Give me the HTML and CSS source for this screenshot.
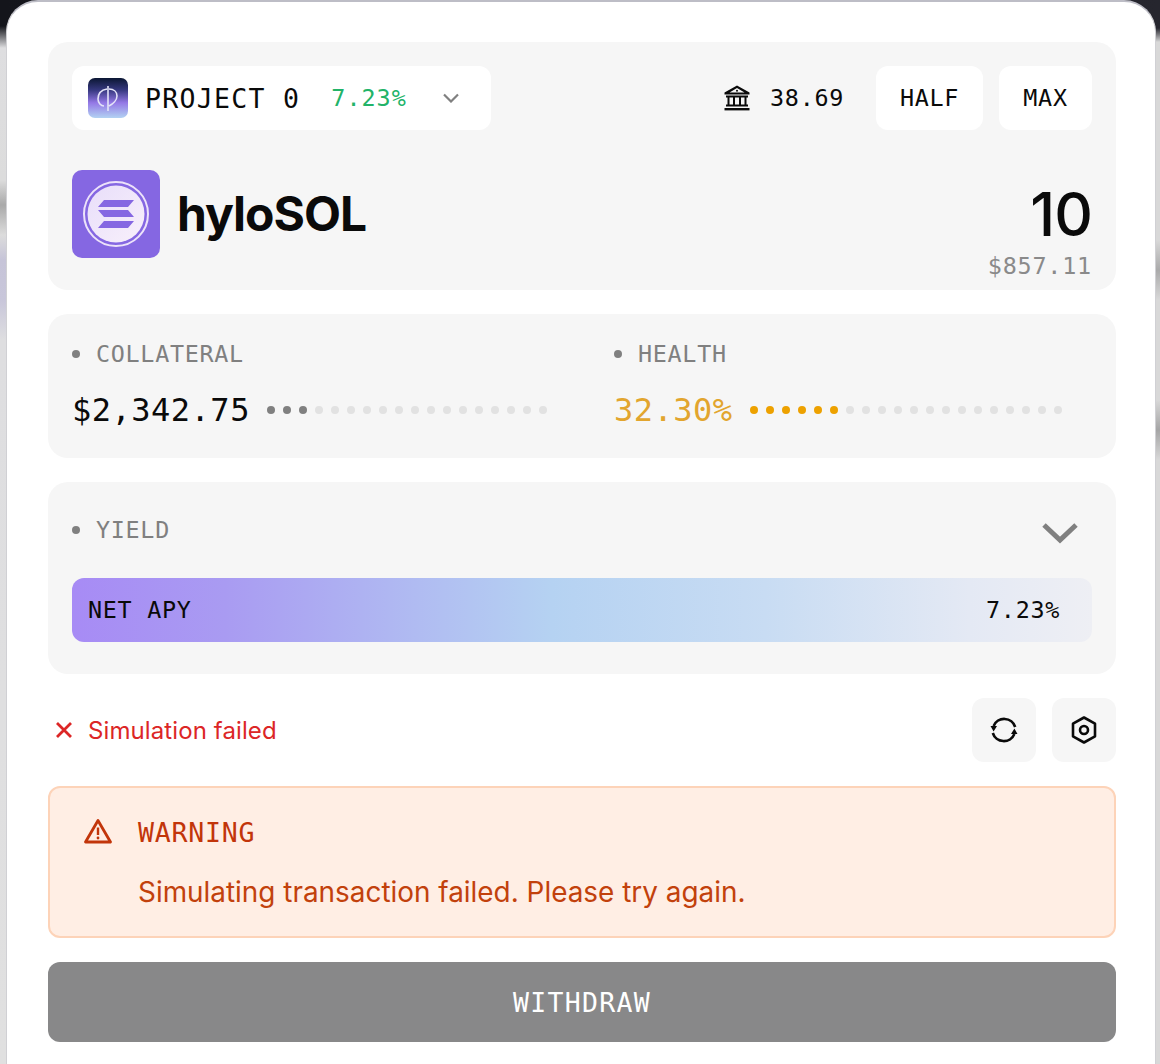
FILE: index.html
```html
<!DOCTYPE html>
<html lang="en">
<head>
  <meta charset="UTF-8">
  <title>Withdraw hyloSOL</title>
  <link rel="stylesheet" href="styles.css">
</head>
<body>
  <main class="sheet">
    <section class="panel amount-panel">
      <div class="top-row">
        <button class="project-select">
          <svg class="project-logo" viewBox="0 0 40 40">
            <defs>
              <linearGradient id="projectBg" x1="0" y1="0" x2="0" y2="1">
                <stop offset="0" stop-color="#0b1733"/>
                <stop offset="0.3" stop-color="#36387f"/>
                <stop offset="0.62" stop-color="#9478e6"/>
                <stop offset="1" stop-color="#b2d2f2"/>
              </linearGradient>
            </defs>
            <rect width="40" height="40" rx="7" fill="url(#projectBg)"/>
            <path d="M19 11 C13 12 10 16 10 21 C10 25 13 28 16 28 M21 11 C26 11 29 14 29 18 C29 22 25 26 21 28 M20 8 V33" fill="none" stroke="#e4e4f8" stroke-width="1.6"/>
          </svg>
          <span class="project-name">PROJECT 0</span>
          <span class="project-apy">7.23%</span>
          <svg class="select-chevron" viewBox="0 0 16 10">
            <path d="M1 1.5 L8 8.5 L15 1.5" fill="none" stroke="#808080" stroke-width="2.2"/>
          </svg>
        </button>
        <div class="balance">
          <svg class="bank-icon" viewBox="0 0 28 28">
            <path d="M14 1.5 L26.5 8.5 V10.5 H1.5 V8.5 Z M14 4 L6.5 8.5 H21.5 Z" fill="#0a0a0a" fill-rule="evenodd"/>
            <circle cx="14" cy="6.8" r="1" fill="#0a0a0a"/>
            <path d="M3 12.5 H25 M5.5 13 V21 M11 13 V21 M17 13 V21 M22.5 13 V21 M3 21.5 H25" fill="none" stroke="#0a0a0a" stroke-width="2"/>
            <rect x="1.5" y="24" width="25" height="2.4" fill="#0a0a0a"/>
          </svg>
          <span>38.69</span>
        </div>
        <button class="pill-btn half-btn">HALF</button>
        <button class="pill-btn max-btn">MAX</button>
      </div>
      <div class="token-row">
        <svg class="token-logo" viewBox="0 0 88 88">
          <defs>
            <linearGradient id="tokenFace" x1="0" y1="0" x2="1" y2="1">
              <stop offset="0" stop-color="#e8defa"/>
              <stop offset="1" stop-color="#f8f0fb"/>
            </linearGradient>
          </defs>
          <rect width="88" height="88" rx="10" fill="#8567e2"/>
          <circle cx="44" cy="44" r="32" fill="none" stroke="#ece2fa" stroke-width="2"/>
          <circle cx="44" cy="44" r="28.5" fill="url(#tokenFace)"/>
          <path d="M32 30 H62 L56 37 H26 Z M26 40 H56 L62 47 H32 Z M32 51 H62 L56 58 H26 Z" fill="#8567e2"/>
        </svg>
        <span class="token-name">hyloSOL</span>
        <div class="token-amount">
          <div class="amount-value">10</div>
          <div class="amount-usd">$857.11</div>
        </div>
      </div>
    </section>

    <section class="panel stats-panel">
      <div class="stat">
        <div class="stat-label">COLLATERAL</div>
        <div class="stat-row">
          <span class="stat-value">$2,342.75</span>
          <div class="dots">
            <i class="on"></i><i class="on"></i><i class="on"></i><i></i><i></i><i></i><i></i><i></i><i></i><i></i><i></i><i></i><i></i><i></i><i></i><i></i><i></i><i></i>
          </div>
        </div>
      </div>
      <div class="stat stat-health">
        <div class="stat-label">HEALTH</div>
        <div class="stat-row">
          <span class="stat-value">32.30%</span>
          <div class="dots">
            <i class="on"></i><i class="on"></i><i class="on"></i><i class="on"></i><i class="on"></i><i class="on"></i><i></i><i></i><i></i><i></i><i></i><i></i><i></i><i></i><i></i><i></i><i></i><i></i><i></i><i></i>
          </div>
        </div>
      </div>
    </section>

    <section class="panel yield-panel">
      <div class="yield-head">
        <div class="stat-label">YIELD</div>
        <svg class="yield-chevron" viewBox="0 0 36 22">
          <path d="M2 3 L18 18 L34 3" fill="none" stroke="#808080" stroke-width="5"/>
        </svg>
      </div>
      <div class="apy-bar">
        <span>NET APY</span>
        <span>7.23%</span>
      </div>
    </section>

    <div class="status-row">
      <svg class="fail-icon" viewBox="0 0 18 18">
        <path d="M2 2 L16 16 M16 2 L2 16" fill="none" stroke="#dc2626" stroke-width="2.8"/>
      </svg>
      <span class="fail-text">Simulation failed</span>
      <button class="icon-btn refresh-btn">
        <svg viewBox="0 0 28 28" width="28" height="28">
          <path d="M25.2 11 A11.5 11.5 0 0 0 3.6 10" fill="none" stroke="#0a0a0a" stroke-width="2.6"/>
          <path d="M2.8 17 A11.5 11.5 0 0 0 24.4 18" fill="none" stroke="#0a0a0a" stroke-width="2.6"/>
          <path d="M0.5 10 L7 10 L3.6 15.5 Z M27.5 18 L21 18 L24.4 12.5 Z" fill="#0a0a0a"/>
        </svg>
      </button>
      <button class="icon-btn settings-btn">
        <svg viewBox="0 0 28 28" width="28" height="28">
          <path d="M14 1.5 L25 7.7 V20.3 L14 26.5 L3 20.3 V7.7 Z" fill="none" stroke="#0a0a0a" stroke-width="2.6" stroke-linejoin="round"/>
          <circle cx="14" cy="14" r="4" fill="none" stroke="#0a0a0a" stroke-width="2.6"/>
        </svg>
      </button>
    </div>

    <section class="warning">
      <svg class="warning-icon" viewBox="0 0 28 26">
        <path d="M14 2.5 L26.5 24 H1.5 Z" fill="none" stroke="#c2350a" stroke-width="2.8" stroke-linejoin="round"/>
        <path d="M14 9.5 V17" stroke="#c2350a" stroke-width="2.4"/>
        <circle cx="14" cy="20" r="1.4" fill="#c2350a"/>
      </svg>
      <div class="warning-body">
        <div class="warning-title">WARNING</div>
        <p class="warning-text">Simulating transaction failed. Please try again.</p>
      </div>
    </section>

    <button class="withdraw-btn">WITHDRAW</button>
  </main>
</body>
</html>
```

FILE: styles.css
```css
* {
  box-sizing: border-box;
}

body {
  margin: 0;
  height: 1064px;
  overflow: hidden;
  padding: 0 4px 0 6px;
  background:
    linear-gradient(to bottom, #14151b 0, #14151b 26px, #dedee0 48px, #dcdcdc 180px, #a9a9a9 205px, #dcdcdc 235px, #c6c4d8 260px, #c8c6da 300px, #dedee0 340px, #e0e0e0 100%) left top / 8px 100% no-repeat,
    linear-gradient(to bottom, #26262e 0, #26262e 28px, #d8d8d8 42px, #d8d8d8 240px, #aaaaaa 270px, #d8d8d8 300px, #d8d8d8 400px, #a5a5a5 430px, #d8d8d8 460px, #d8d8d8 100%) right top / 5px 100% no-repeat,
    linear-gradient(to right, #14151b, #26262e) left top / 100% 34px no-repeat,
    #e0e0e0;
  font-family: "DejaVu Sans Mono", monospace;
  color: #0a0a0a;
}

button {
  font-family: inherit;
  border: none;
  cursor: pointer;
}

.sheet {
  height: 1100px;
  background: #fff;
  border-radius: 32px 32px 0 0;
  border: 1px solid #d0d0d4;
  border-top: 2px solid #bdbdc6;
  border-bottom: none;
  padding: 40px 39px 0 41px;
  display: flex;
  flex-direction: column;
}

.panel {
  background: #f6f6f6;
  border-radius: 20px;
  padding: 24px;
}

.amount-panel {
  height: 248px;
  flex: none;
}

.top-row {
  display: flex;
  align-items: center;
  height: 64px;
}

.project-select {
  width: 419px;
  height: 64px;
  background: #fff;
  border-radius: 12px;
  padding: 0 0 0 16px;
  display: flex;
  align-items: center;
  color: #0a0a0a;
}

.project-logo {
  width: 40px;
  height: 40px;
  flex: none;
}

.project-name {
  margin-left: 17px;
  font-size: 26.5px;
  letter-spacing: 1.3px;
}

.project-apy {
  margin-left: 31px;
  font-size: 23.4px;
  letter-spacing: 1px;
  color: #22b368;
}

.select-chevron {
  width: 16px;
  height: 10px;
  margin-left: 36px;
}

.balance {
  margin-left: auto;
  display: flex;
  align-items: center;
  gap: 19px;
  font-size: 23.4px;
  letter-spacing: 0.7px;
}

.bank-icon {
  width: 28px;
  height: 28px;
}

.pill-btn {
  height: 64px;
  background: #fff;
  border-radius: 12px;
  font-size: 23.4px;
  letter-spacing: 0.7px;
  color: #0a0a0a;
  padding: 0;
}

.half-btn {
  width: 107px;
  margin-left: 32px;
}

.max-btn {
  width: 93px;
  margin-left: 16px;
}

.token-row {
  display: flex;
  align-items: flex-start;
  margin-top: 40px;
}

.token-logo {
  width: 88px;
  height: 88px;
  flex: none;
}

.token-name {
  margin-left: 17px;
  font-family: "Inter", sans-serif;
  font-weight: 700;
  font-size: 48px;
  letter-spacing: -1px;
  line-height: 88px;
}

.token-amount {
  margin-left: auto;
  margin-top: 12px;
  text-align: right;
}

.amount-value {
  font-family: "Inter", sans-serif;
  font-weight: 500;
  font-size: 60px;
  line-height: 64px;
  letter-spacing: -1px;
}

.amount-usd {
  margin-top: 5px;
  font-size: 23.4px;
  letter-spacing: 0.8px;
  line-height: 30px;
  color: #8a8a8a;
}

.stats-panel {
  margin-top: 24px;
  height: 144px;
  flex: none;
  display: flex;
}

.stat {
  flex: none;
  width: 542px;
}

.stat-health {
  flex: 1;
  width: auto;
}

.stat-label {
  display: flex;
  align-items: center;
  font-size: 23.4px;
  letter-spacing: 0.7px;
  line-height: 32px;
  color: #808080;
}

.stat-label::before {
  content: "";
  width: 8px;
  height: 8px;
  border-radius: 50%;
  background: #808080;
  margin-right: 16px;
}

.stat-row {
  display: flex;
  align-items: center;
  margin-top: 20px;
}

.stat-value {
  font-size: 32px;
  letter-spacing: 0.5px;
  line-height: 40px;
}

.dots {
  display: flex;
  gap: 8px;
  margin-left: 17px;
}

.dots i {
  width: 8px;
  height: 8px;
  border-radius: 50%;
  background: #e2e2e2;
}

.dots i.on {
  background: #808080;
}

.stat-health .stat-value {
  color: #e2a52e;
}

.stat-health .dots i.on {
  background: #eda100;
}

.yield-panel {
  margin-top: 24px;
  height: 192px;
  flex: none;
}

.yield-head {
  display: flex;
  justify-content: space-between;
  align-items: center;
  height: 48px;
}

.yield-chevron {
  width: 36px;
  height: 22px;
  margin-right: 14px;
  margin-top: 6px;
}

.apy-bar {
  margin-top: 24px;
  height: 64px;
  border-radius: 12px;
  padding: 0 32px 0 16px;
  display: flex;
  justify-content: space-between;
  align-items: center;
  font-size: 23.4px;
  letter-spacing: 0.7px;
  background: linear-gradient(to right, #a78bf5 0, #a99bf2 15%, #b5d2f2 47%, #c8dcf3 68%, #e4e9f4 88%, #eeeff4 100%);
}

.status-row {
  margin-top: 24px;
  height: 64px;
  flex: none;
  display: flex;
  align-items: center;
}

.fail-icon {
  width: 18px;
  height: 18px;
  margin-left: 7px;
}

.fail-text {
  margin-left: 15px;
  font-family: "Inter", sans-serif;
  font-size: 24px;
  letter-spacing: 0.1px;
  color: #dc2626;
}

.icon-btn {
  width: 64px;
  height: 64px;
  background: #f6f6f6;
  border-radius: 12px;
  padding: 0;
  display: flex;
  align-items: center;
  justify-content: center;
}

.refresh-btn {
  margin-left: auto;
}

.settings-btn {
  margin-left: 16px;
}

.warning {
  margin-top: 24px;
  height: 152px;
  flex: none;
  background: #ffeee4;
  border: 2px solid #fdd3b8;
  border-radius: 12px;
  padding: 30px 34px;
  display: flex;
}

.warning-icon {
  width: 28px;
  height: 26px;
  flex: none;
}

.warning-body {
  margin-left: 26px;
}

.warning-title {
  font-size: 26.6px;
  letter-spacing: 0.75px;
  line-height: 30px;
  color: #c2350a;
}

.warning-text {
  margin: 28px 0 0 0;
  font-family: "Inter", sans-serif;
  font-size: 27.9px;
  line-height: 32px;
  color: #c2410c;
}

.withdraw-btn {
  margin-top: 24px;
  height: 80px;
  flex: none;
  background: #888889;
  border-radius: 12px;
  color: #fff;
  font-size: 26.5px;
  letter-spacing: 1.3px;
}
```
